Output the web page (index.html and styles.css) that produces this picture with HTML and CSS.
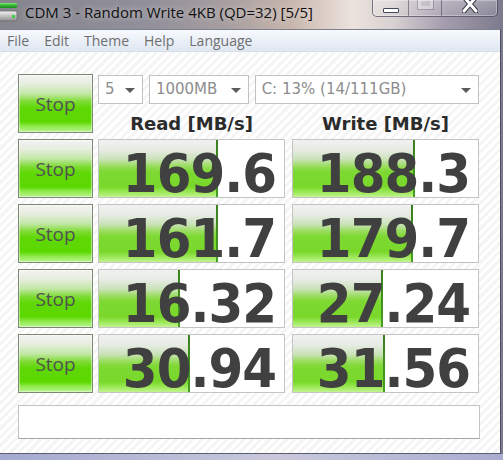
FILE: index.html
```html
<!DOCTYPE html>
<html lang="en">
<head>
  <meta charset="UTF-8" />
  <title>CDM 3 - Random Write 4KB (QD=32) [5/5]</title>
  <link rel="stylesheet" href="styles.css">
</head>
<body>
  <div class="frame">
    <div class="titlebar">
      <svg class="app-icon" width="20" height="22" viewBox="0 0 20 22">
        <defs>
          <linearGradient id="gbar" x1="0" y1="0" x2="0" y2="1">
            <stop offset="0" stop-color="#7ee87a" />
            <stop offset="0.5" stop-color="#2fb52f" />
            <stop offset="1" stop-color="#1d8a1d" />
          </linearGradient>
          <linearGradient id="gdisk" x1="0" y1="0" x2="0" y2="1">
            <stop offset="0" stop-color="#f4f4f4" />
            <stop offset="1" stop-color="#8d8d8d" />
          </linearGradient>
        </defs>
        <rect x="-2" y="2" width="19" height="5" rx="1" fill="url(#gbar)" />
        <rect x="-2" y="10" width="19" height="10" rx="2" fill="url(#gdisk)" stroke="#6d6d6d" stroke-width="0.8" />
        <rect x="12" y="14" width="3" height="3" fill="#3fd13f" />
      </svg>
      <span class="title">CDM 3 - Random Write 4KB (QD=32) [5/5]</span>
      <div class="caption">
        <div class="cap-btn cap-min"><span class="glyph-min"></span></div>
        <div class="cap-btn cap-max"><span class="glyph-max"></span></div>
        <div class="cap-btn cap-close">
          <svg width="16" height="14" viewBox="0 0 16 14">
            <path d="M2 -2 L14 12 M14 -2 L2 12" stroke="#3b3b48" stroke-width="5" stroke-linecap="round" />
            <path d="M2 -2 L14 12 M14 -2 L2 12" stroke="#ffffff" stroke-width="3" stroke-linecap="round" />
          </svg>
        </div>
      </div>
    </div>

    <div class="window">
      <div class="menubar">
        <span>File</span>
        <span>Edit</span>
        <span>Theme</span>
        <span>Help</span>
        <span>Language</span>
      </div>

      <div class="client">
        <div class="bench">
          <button class="stop">Stop</button>
          <div class="controls">
            <div class="selects">
              <div class="combo combo-count">5</div>
              <div class="combo combo-size">1000MB</div>
              <div class="combo combo-drive">C: 13% (14/111GB)</div>
            </div>
            <div class="heads">
              <div class="head">Read [MB/s]</div>
              <div class="head">Write [MB/s]</div>
            </div>
          </div>

          <button class="stop">Stop</button>
          <div class="cell" style="--w:119px"><span class="num">169.6</span></div>
          <div class="cell" style="--w:122px"><span class="num">188.3</span></div>

          <button class="stop">Stop</button>
          <div class="cell" style="--w:119px"><span class="num">161.7</span></div>
          <div class="cell" style="--w:120px"><span class="num">179.7</span></div>

          <button class="stop">Stop</button>
          <div class="cell" style="--w:81px"><span class="num">16.32</span></div>
          <div class="cell" style="--w:90px"><span class="num">27.24</span></div>

          <button class="stop">Stop</button>
          <div class="cell" style="--w:91px"><span class="num">30.94</span></div>
          <div class="cell" style="--w:92px"><span class="num">31.56</span></div>
        </div>

        <div class="comment"></div>
      </div>
    </div>
  </div>
</body>
</html>
```

FILE: styles.css
```css
* {
  box-sizing: border-box;
}

body {
  margin: 0;
  width: 503px;
  height: 460px;
  overflow: hidden;
  font-family: 'Open Sans', sans-serif;
}

.frame {
  height: 460px;
  display: flex;
  flex-direction: column;
  background:
    linear-gradient(90deg, #a4a9cf 0%, #b8bad6 30%, #c9c8dc 55%, #a9acd0 100%) 0 454px / 100% 6px no-repeat,
    linear-gradient(90deg, #85858d 0%, #92909a 30%, #a79ea0 45%, #c8b6ad 58%, #ece3dd 70%, #d9d1d2 78%, #a69eae 88%, #7b7a8c 100%);
}

/* title bar */

.titlebar {
  height: 29px;
  display: flex;
  align-items: flex-start;
}

.app-icon {
  margin-top: 1px;
  flex-shrink: 0;
}

.title {
  margin-left: 5px;
  margin-top: 2px;
  font-size: 15px;
  color: #111;
  white-space: nowrap;
  text-shadow: 0 0 6px rgba(255, 255, 255, 0.6);
}

.caption {
  margin-left: auto;
  margin-right: 5px;
  height: 17px;
  display: flex;
  border: 1px solid rgba(55, 55, 75, 0.65);
  border-top: none;
  border-radius: 0 0 5px 5px;
  overflow: hidden;
  background: linear-gradient(rgba(255, 255, 255, 0.25), rgba(255, 255, 255, 0.08));
  box-shadow: inset 0 0 0 1px rgba(255, 255, 255, 0.3);
}

.cap-btn {
  display: flex;
  justify-content: center;
  align-items: flex-start;
}

.cap-btn + .cap-btn {
  border-left: 1px solid rgba(55, 55, 75, 0.5);
}

.cap-min {
  width: 35px;
}

.cap-max {
  width: 33px;
}

.cap-close {
  width: 56px;
}

.glyph-min {
  margin-top: 8px;
  width: 16px;
  height: 5px;
  background: #fff;
  border: 1px solid #44465a;
  border-radius: 1px;
}

.glyph-max {
  margin-top: -2px;
  width: 15px;
  height: 11px;
  border: 3px solid rgba(255, 255, 255, 0.35);
  outline: 1px solid rgba(70, 70, 90, 0.3);
}

.cap-close svg {
  margin-top: -1px;
}

/* window body */

.window {
  width: 501px;
  height: 425px;
  display: flex;
  flex-direction: column;
  border-top: 1px solid #7c7f8e;
  border-right: 1px solid #4e5161;
  border-bottom: 1px solid #5c5f70;
}

.menubar {
  height: 22px;
  display: flex;
  gap: 15px;
  padding-left: 7px;
  font-size: 14px;
  line-height: 22px;
  color: #6f6f6f;
  background: linear-gradient(#f7f9fd, #dfe7f2);
  border-bottom: 1px solid #d7dfea;
}

.client {
  flex: 1;
  padding: 22px 0 0 18px;
  background: repeating-linear-gradient(-45deg, #ffffff 0px, #ffffff 3px, #f5f5f5 3px, #f5f5f5 6px);
}

.bench {
  display: grid;
  grid-template-columns: 80px 194px 187px;
  grid-auto-rows: 59px;
  row-gap: 6px;
}

.stop {
  width: 75px;
  height: 59px;
  padding: 0;
  font-family: 'Open Sans', sans-serif;
  font-size: 19px;
  color: #515151;
  border: 1px solid #7a8874;
  box-shadow: inset 0 0 0 1px rgba(255, 255, 255, 0.45);
  background: linear-gradient(#f3f3f2 0%, #e6eedf 16%, #c2e7a4 33%, #7cdb30 47%, #5fd806 58%, #5cd800 82%, #8fea4c 90%, #b8f38e 100%);
}

.controls {
  grid-column: 2 / 4;
}

.selects {
  display: flex;
  gap: 6px;
  margin-top: 1px;
}

.combo {
  position: relative;
  height: 29px;
  padding-left: 6px;
  border: 1px solid #c2c2c2;
  background: #fff;
  font-family: 'DejaVu Sans', sans-serif;
  font-size: 15px;
  line-height: 27px;
  color: #8d8d8d;
}

.combo::after {
  content: "";
  position: absolute;
  right: 7px;
  top: 12px;
  border-left: 5px solid transparent;
  border-right: 5px solid transparent;
  border-top: 5px solid #5b5b5b;
}

.combo-count {
  width: 45px;
}

.combo-size {
  width: 100px;
}

.combo-drive {
  width: 225px;
}

.heads {
  display: grid;
  grid-template-columns: 187px 187px;
  column-gap: 7px;
  padding-top: 10px;
}

.head {
  text-align: center;
  font-family: 'DejaVu Sans', sans-serif;
  font-weight: 700;
  font-size: 18px;
  line-height: 19px;
  color: #2b2b2b;
}

.cell {
  width: 187px;
  height: 59px;
  display: flex;
  justify-content: flex-end;
  align-items: center;
  padding: 10px 8px 0 0;
  border: 1px solid #c4c4c4;
  background:
    linear-gradient(#3a7f1f, #47a022) calc(var(--w) - 2px) 0 / 2px 100% no-repeat,
    linear-gradient(#f0f1f0 0%, #e6ebe3 18%, #c9e2b7 34%, #96dc58 47%, #7ed933 55%, #79d82a 82%, #9fe95c 92%, #c2f390 100%) 0 0 / var(--w) 100% no-repeat,
    #fff;
}

.num {
  display: inline-block;
  font-family: 'DejaVu Sans', sans-serif;
  font-weight: 700;
  font-size: 50px;
  line-height: 1;
  letter-spacing: -1px;
  color: #404040;
  transform: scaleY(1.06);
}

.comment {
  width: 462px;
  height: 34px;
  margin-top: 12px;
  background: #fff;
  border: 1px solid #c3c3c3;
  border-bottom-color: #a5a5a5;
}
```
